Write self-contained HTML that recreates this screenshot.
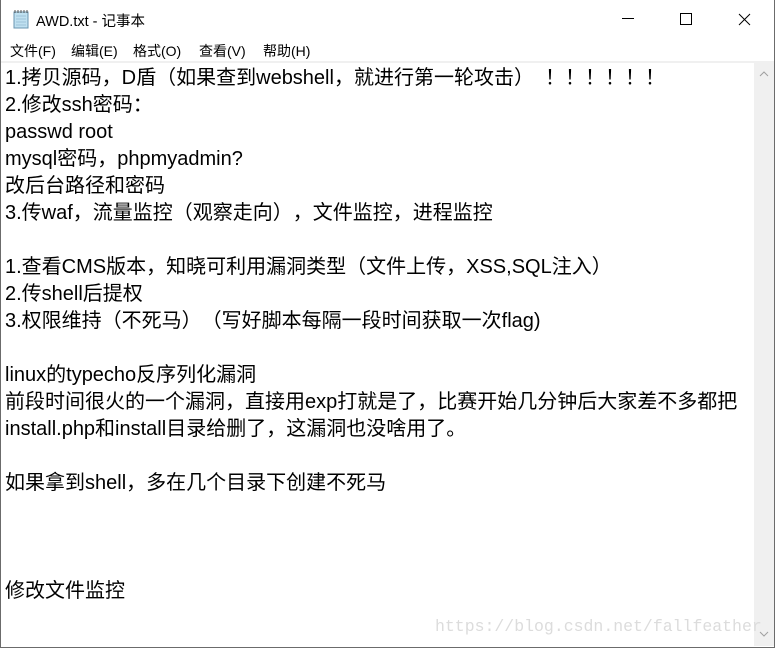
<!DOCTYPE html>
<html><head><meta charset="utf-8"><style>
*{margin:0;padding:0;box-sizing:border-box}
body{width:775px;height:648px;overflow:hidden;background:#fff;position:relative;font-family:"Liberation Sans","Noto Sans CJK SC",sans-serif}
.win{position:absolute;left:0;top:0;width:775px;height:648px;border:1px solid #6b6b6b;border-top:none}
.title{position:absolute;left:0;top:0;height:38px;width:773px;font-size:14.5px;color:#000}
.title .t{position:absolute;left:35px;top:10px}
.menu{position:absolute;left:9px;top:41px;font-size:14px;white-space:pre}
.menu span{position:absolute;top:0}
.sep{position:absolute;left:0;top:61px;width:773px;height:2px;background:#f0f0f0}
.txt{position:absolute;left:4px;top:65px;font-size:20px;line-height:27px;white-space:pre;color:#000;text-spacing-trim:space-all;font-feature-settings:"chws" 0,"halt" 0,"palt" 0}
.sb{position:absolute;left:753px;top:63px;width:20px;height:583px;background:#f0f0f0}
.wm{position:absolute;left:434px;top:617px;font-family:"Liberation Mono","DejaVu Sans Mono",monospace;font-size:16.5px;color:#dcdcdc;white-space:pre}
</style></head><body>
<div class="win">
<div class="title">
<svg style="position:absolute;left:11px;top:9px" width="18" height="20" viewBox="0 0 18 20"><rect x="2" y="3" width="14" height="16" fill="#bfe0f0" stroke="#6a95b0"/><path d="M4 7h10M4 10h10M4 13h10M4 16h10" stroke="#9cc2d8"/><path d="M3 1v3M6 1v3M9 1v3M12 1v3M15 1v3" stroke="#555"/></svg>
<span class="t">AWD.txt - 记事本</span>
<svg style="position:absolute;left:620px;top:12px" width="140" height="16"><path d="M1 6.5h12" stroke="#000"/><rect x="59.5" y="1.5" width="11" height="11" fill="none" stroke="#000"/><path d="M118 2l11 11M129 2l-11 11" stroke="#000"/></svg>
</div>
<div class="menu"><span style="left:0">文件(F)</span><span style="left:61px">编辑(E)</span><span style="left:123px">格式(O)</span><span style="left:189px">查看(V)</span><span style="left:253px">帮助(H)</span></div>
<div class="sep"></div>
<div class="txt">1.拷贝源码，D盾（如果查到webshell，就进行第一轮攻击）  ！！！！！！
2.修改ssh密码：
passwd root
mysql密码，phpmyadmin?
改后台路径和密码
3.传waf，流量监控（观察走向），文件监控，进程监控

1.查看CMS版本，知晓可利用漏洞类型（文件上传，XSS,SQL注入）
2.传shell后提权
3.权限维持（不死马）（写好脚本每隔一段时间获取一次flag)

linux的typecho反序列化漏洞
前段时间很火的一个漏洞，直接用exp打就是了，比赛开始几分钟后大家差不多都把
install.php和install目录给删了，这漏洞也没啥用了。

如果拿到shell，多在几个目录下创建不死马



修改文件监控</div>
<div class="sb"><svg style="position:absolute;left:5px;top:8px" width="10" height="6"><path d="M1 5l4-4 4 4" stroke="#a0a0a0" fill="none"/></svg><svg style="position:absolute;left:5px;top:568px" width="10" height="6"><path d="M1 1l4 4 4-4" stroke="#a0a0a0" fill="none"/></svg></div>
<div class="wm">https://blog.csdn.net/fallfeather</div>
</div>
</body></html>
